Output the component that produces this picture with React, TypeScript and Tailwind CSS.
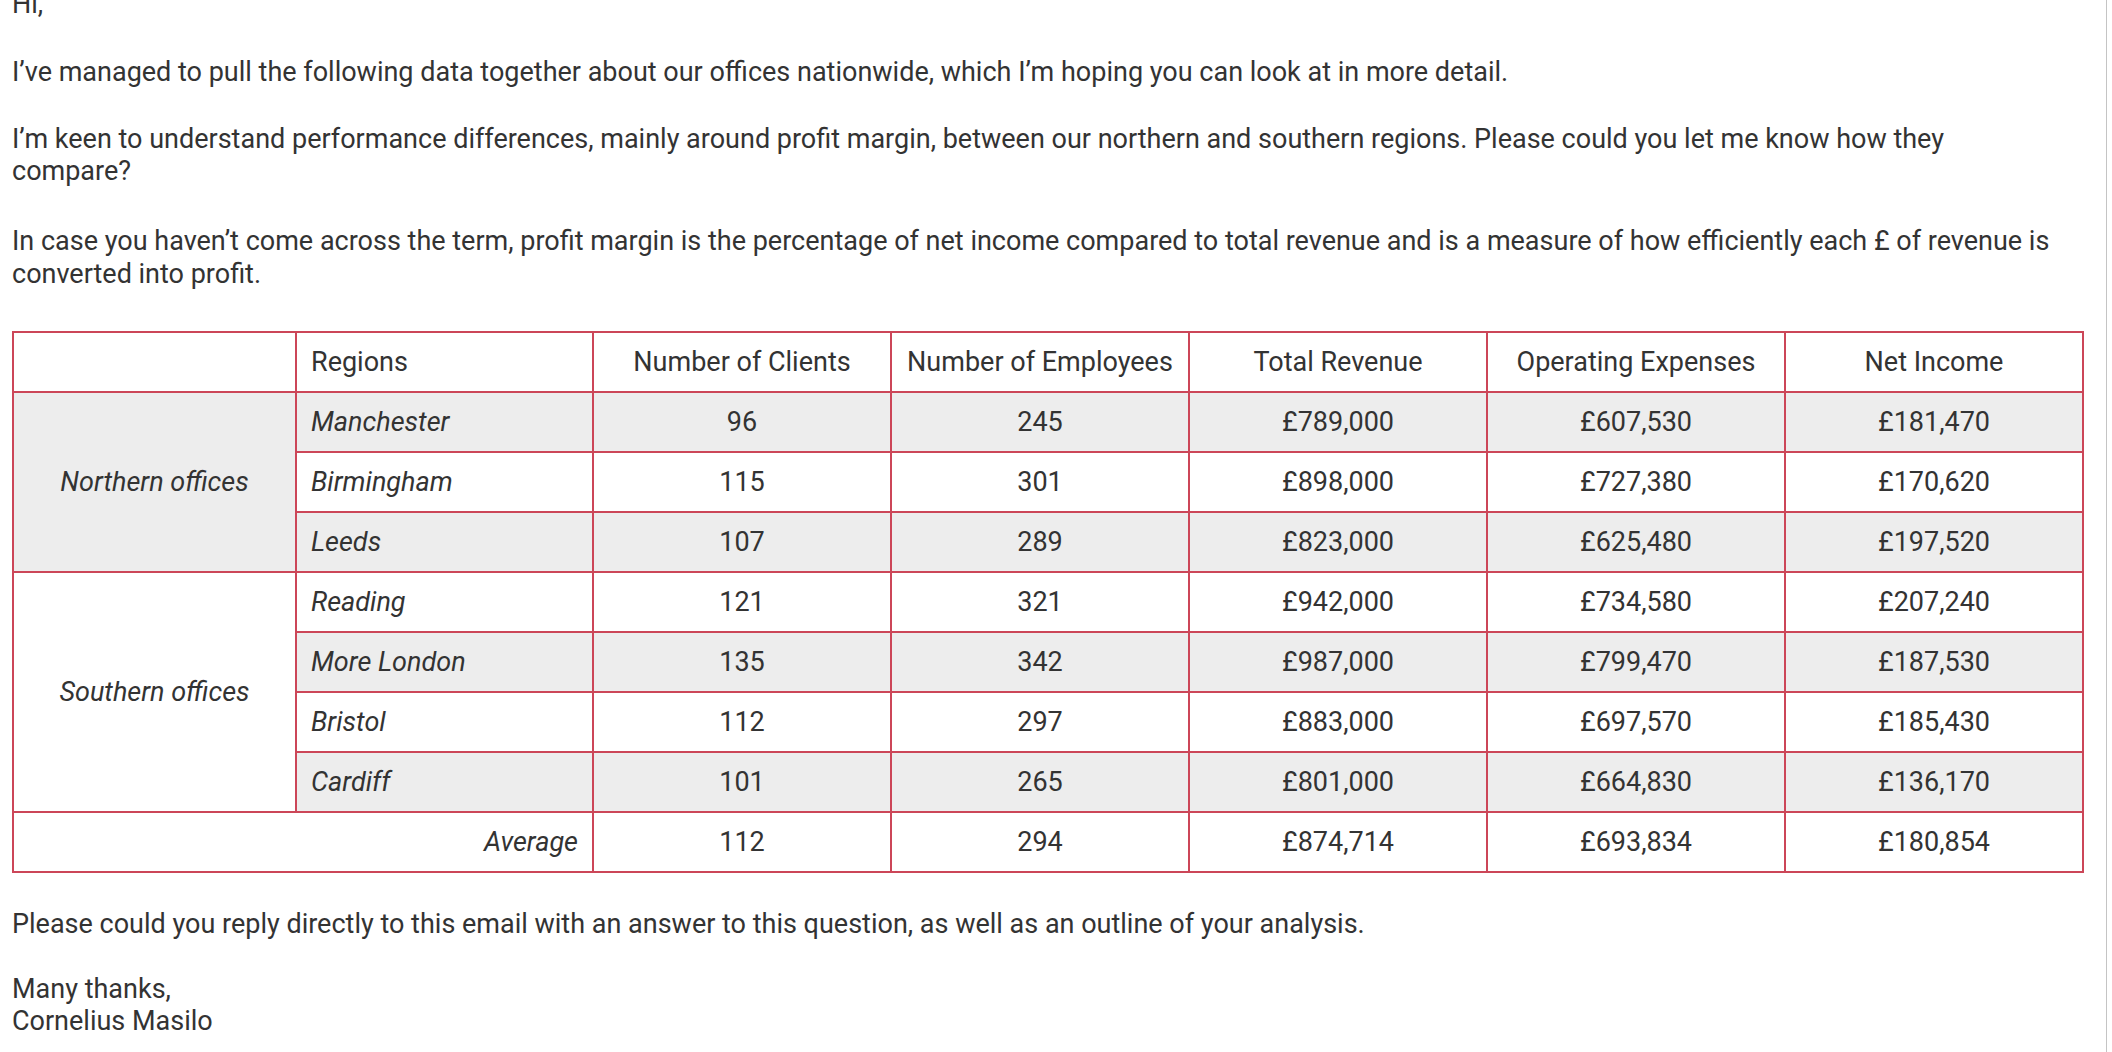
import React from "react";

type Row = {
  city: string;
  clients: string;
  employees: string;
  revenue: string;
  expenses: string;
  income: string;
};

const northern: Row[] = [
  { city: "Manchester", clients: "96", employees: "245", revenue: "£789,000", expenses: "£607,530", income: "£181,470" },
  { city: "Birmingham", clients: "115", employees: "301", revenue: "£898,000", expenses: "£727,380", income: "£170,620" },
  { city: "Leeds", clients: "107", employees: "289", revenue: "£823,000", expenses: "£625,480", income: "£197,520" },
];

const southern: Row[] = [
  { city: "Reading", clients: "121", employees: "321", revenue: "£942,000", expenses: "£734,580", income: "£207,240" },
  { city: "More London", clients: "135", employees: "342", revenue: "£987,000", expenses: "£799,470", income: "£187,530" },
  { city: "Bristol", clients: "112", employees: "297", revenue: "£883,000", expenses: "£697,570", income: "£185,430" },
  { city: "Cardiff", clients: "101", employees: "265", revenue: "£801,000", expenses: "£664,830", income: "£136,170" },
];

const cell = "border-2 border-[#cc4658] h-[60px] px-[14px] align-middle";
const num = `${cell} text-center`;

function Cells({ row }: { row: Row }) {
  return (
    <>
      <td className={`${cell} italic`}>{row.city}</td>
      <td className={num}>{row.clients}</td>
      <td className={num}>{row.employees}</td>
      <td className={num}>{row.revenue}</td>
      <td className={num}>{row.expenses}</td>
      <td className={num}>{row.income}</td>
    </>
  );
}

export default function App() {
  return (
    <div className="w-[2107px] h-[1052px] overflow-hidden border-r border-[#c4c4c4] bg-white pl-3 font-['Roboto',sans-serif] text-[27px] leading-[34px] text-[#333333]">
      <p className="-mt-[13px]">Hi,</p>

      <p className="mt-[34px]">
        I’ve managed to pull the following data together about our offices nationwide, which I’m hoping you can look at in more detail.
      </p>

      <p className="mt-[34px] leading-[32px]">
        I’m keen to understand performance differences, mainly around profit margin, between our northern and southern regions. Please could you let me know how they
        <br />
        compare?
      </p>

      <p className="mt-[38px] leading-[33px]">
        In case you haven’t come across the term, profit margin is the percentage of net income compared to total revenue and is a measure of how efficiently each £ of revenue is
        <br />
        converted into profit.
      </p>

      {/* Offices table */}
      <table className="mt-[40px] w-[2070px] table-fixed border-collapse">
        <colgroup>
          <col className="w-[283px]" />
          <col className="w-[297px]" />
          <col className="w-[298px]" />
          <col className="w-[298px]" />
          <col className="w-[298px]" />
          <col className="w-[298px]" />
          <col className="w-[298px]" />
        </colgroup>
        <thead>
          <tr className="bg-white">
            <th className={`${cell} font-normal`}></th>
            <th className={`${cell} text-left font-normal`}>Regions</th>
            <th className={`${num} font-normal`}>Number of Clients</th>
            <th className={`${num} font-normal`}>Number of Employees</th>
            <th className={`${num} font-normal`}>Total Revenue</th>
            <th className={`${num} font-normal`}>Operating Expenses</th>
            <th className={`${num} font-normal`}>Net Income</th>
          </tr>
        </thead>
        <tbody>
          {northern.map((row, i) => (
            <tr key={row.city} className={i % 2 === 0 ? "bg-[#ededed]" : "bg-white"}>
              {i === 0 && (
                <td rowSpan={3} className={`${cell} text-center italic`}>
                  Northern offices
                </td>
              )}
              <Cells row={row} />
            </tr>
          ))}
          {southern.map((row, i) => (
            <tr key={row.city} className={i % 2 === 1 ? "bg-[#ededed]" : "bg-white"}>
              {i === 0 && (
                <td rowSpan={4} className={`${cell} text-center italic`}>
                  Southern offices
                </td>
              )}
              <Cells row={row} />
            </tr>
          ))}
          <tr className="bg-white">
            <td colSpan={2} className={`${cell} text-right italic`}>
              Average
            </td>
            <td className={num}>112</td>
            <td className={num}>294</td>
            <td className={num}>£874,714</td>
            <td className={num}>£693,834</td>
            <td className={num}>£180,854</td>
          </tr>
        </tbody>
      </table>

      <p className="mt-[34px]">
        Please could you reply directly to this email with an answer to this question, as well as an outline of your analysis.
      </p>

      <p className="mt-[32px] leading-[32px]">
        Many thanks,
        <br />
        Cornelius Masilo
      </p>
    </div>
  );
}
